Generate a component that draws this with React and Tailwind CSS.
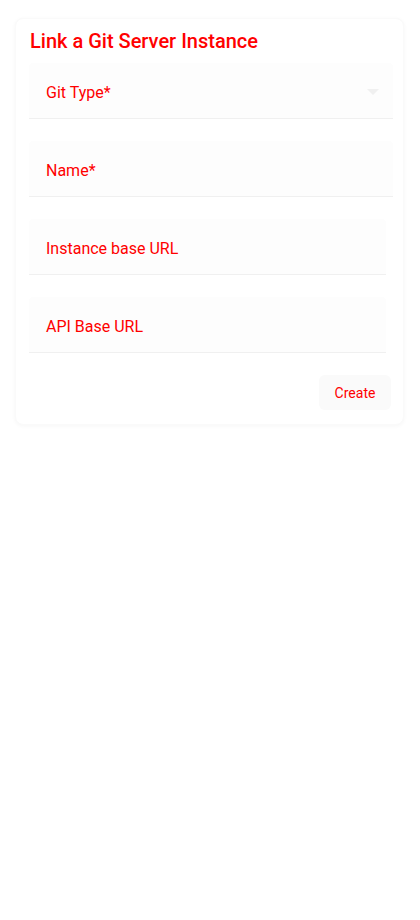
import { useState } from 'react'

const Field = ({ label, required, select, narrow }) => {
  const [value, setValue] = useState('')

  return (
    <div className={`relative h-14 bg-[#fdfdfd] rounded-t border-b border-[#f0f0f0] ${narrow ? 'w-[357px]' : 'w-[364px]'}`}>
      {value === '' && (
        <span className="absolute left-[17px] top-[18px] text-base leading-6 text-[#ff0000] pointer-events-none">
          {label}
          {required && '*'}
        </span>
      )}
      <input
        value={value}
        onChange={(e) => setValue(e.target.value)}
        className="w-full h-full bg-transparent px-[17px] pt-4 text-base outline-none"
      />
      {select && (
        <svg
          className="absolute right-[14px] top-[26px] pointer-events-none"
          width="12"
          height="7"
          viewBox="0 0 12 7"
        >
          <path d="M0 0 L12 0 L6 6 Z" fill="#f0f0f0" />
        </svg>
      )}
    </div>
  )
}

const App = () => {
  return (
    <div className="min-h-[920px] bg-white pt-[18px] px-[15px]" style={{ fontFamily: 'Roboto, "Liberation Sans", sans-serif' }}>
      {/* Card */}
      <div className="w-[389px] h-[407px] bg-white rounded-lg shadow-[0_1px_4px_rgba(0,0,0,0.04)] border border-[#fafafa] px-[13px] pt-[6px]">
        <h2 className="text-[20px] font-medium leading-8 text-[#ff0000] pl-[1px]">
          Link a Git Server Instance
        </h2>

        <div className="flex flex-col gap-[22px] mt-[6px]">
          <Field label="Git Type" required select />
          <Field label="Name" required />
          <Field label="Instance base URL" narrow />
          <Field label="API Base URL" narrow />
        </div>

        <div className="flex justify-end mt-[22px] -mr-[1px]">
          <button className="w-[72px] h-[35px] bg-[#fafafa] rounded-md text-sm font-normal text-[#ff0000]">
            Create
          </button>
        </div>
      </div>
    </div>
  )
}

export default App
